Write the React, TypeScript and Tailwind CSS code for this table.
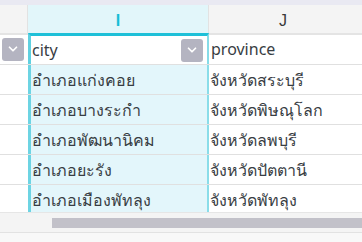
import { ChevronDown } from "lucide-react";

const rows = [
  { city: "อำเภอแก่งคอย", province: "จังหวัดสระบุรี" },
  { city: "อำเภอบางระกำ", province: "จังหวัดพิษณุโลก" },
  { city: "อำเภอพัฒนานิคม", province: "จังหวัดลพบุรี" },
  { city: "อำเภอยะรัง", province: "จังหวัดปัตตานี" },
  { city: "อำเภอเมืองพัทลุง", province: "จังหวัดพัทลุง" },
];

function FilterButton() {
  return (
    <div className="flex h-[23px] w-[22px] shrink-0 items-center justify-center rounded-[3px] bg-[#b4b4c1]">
      <ChevronDown className="h-[14px] w-[14px] text-white" strokeWidth={3} />
    </div>
  );
}

export default function App() {
  return (
    <div
      className="flex h-[242px] w-[362px] flex-col overflow-hidden bg-[#f8f8f8] text-[16px] text-[#383d43]"
      style={{ fontFamily: '"Noto Sans", "Liberation Sans", sans-serif' }}
    >
      <div className="h-[5px] shrink-0 bg-[#e9e9f2]" />

      {/* column letters */}
      <div
        className="grid h-[28px] shrink-0 grid-cols-[28px_181px_200px] bg-[#f4f4f4] text-[16px]"
        style={{ fontFamily: '"Liberation Sans", sans-serif' }}
      >
        <div className="border-r border-[#e2e2e2]" />
        <div className="flex items-center justify-center border-r border-[#e2e2e2] bg-[#e2f6fa] pt-[3px] font-bold text-[#16bdd6]">
          I
        </div>
        <div className="flex items-center justify-center pt-[3px] pr-[52px] text-[#3a3a3a]">J</div>
      </div>

      <div className="h-[179px] shrink-0 overflow-hidden bg-white">
        {/* filter row */}
        <div className="grid h-[32px] grid-cols-[28px_181px_200px] border-b border-[#e0e0e0]">
          <div className="flex items-center border-t-[2px] border-[#e4e4e4] pb-[1px] pl-[2px]">
            <FilterButton />
          </div>
          <div className="flex items-center justify-between border-t-[3px] border-l-[3px] border-r-[2px] border-t-[#1ec0d8] border-l-[#5fd0e0] border-r-[#86dce8] bg-white pl-[1px] pr-[4px]">
            <span>city</span>
            <FilterButton />
          </div>
          <div className="flex items-center border-t-[2px] border-[#e4e4e4] pb-[1px] pl-[2px]">
            <span>province</span>
            <div className="ml-auto h-[23px] w-[1px] bg-[#d8d8de]" />
          </div>
        </div>

        {rows.map((row) => (
          <div
            key={row.city}
            className="grid h-[30px] grid-cols-[28px_181px_200px] border-b border-[#e0e0e0] font-medium"
          >
            <div />
            <div className="flex items-center border-l-[3px] border-r-[2px] border-l-[#6dd4e3] border-r-[#8adde9] bg-[#e3f6fb] pl-[1px]">
              {row.city}
            </div>
            <div className="flex items-center pl-[1px]">{row.province}</div>
          </div>
        ))}
      </div>

      {/* horizontal scrollbar */}
      <div className="flex h-[20px] shrink-0 items-center border-t border-[#e6e6e6] bg-[#f4f4f4] pl-[52px] pt-[1px]">
        <div className="h-[10px] flex-1 bg-[#c2c1c9]" />
      </div>
      <div className="flex-1 border-t border-[#e2e2e2] bg-[#f8f8f8]" />
    </div>
  );
}
